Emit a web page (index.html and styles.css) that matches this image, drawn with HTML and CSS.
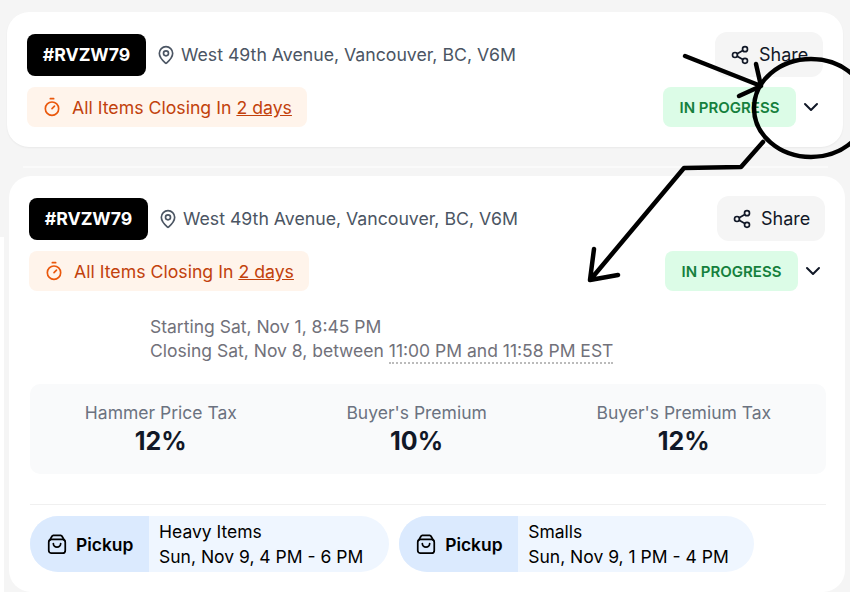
FILE: index.html
```html
<!DOCTYPE html>
<html lang="en">
<head>
    <meta charset="UTF-8">
    <meta name="viewport" content="width=device-width, initial-scale=1.0">
    <title>Auction Cards</title>
    <link rel="stylesheet" href="styles.css">
</head>
<body>
    <svg class="iconDefs" width="0" height="0">
        <symbol id="iconPin" viewBox="0 0 24 24">
            <path d="M20 10c0 4.993-5.539 10.193-7.399 11.799a1 1 0 0 1-1.202 0C9.539 20.193 4 14.993 4 10a8 8 0 0 1 16 0"/>
            <circle cx="12" cy="10" r="3"/>
        </symbol>
        <symbol id="iconTimer" viewBox="0 0 24 24">
            <path d="M10 2h4M12 14l3-3"/>
            <circle cx="12" cy="14" r="8"/>
        </symbol>
        <symbol id="iconShare" viewBox="0 0 24 24">
            <circle cx="18" cy="5" r="3"/>
            <circle cx="6" cy="12" r="3"/>
            <circle cx="18" cy="19" r="3"/>
            <path d="M8.59 13.51l6.83 3.98M15.41 6.51l-6.82 3.98"/>
        </symbol>
        <symbol id="iconChevron" viewBox="0 0 24 24">
            <path d="M6 9l6 6 6-6"/>
        </symbol>
        <symbol id="iconBag" viewBox="0 0 24 24">
            <rect x="3" y="7" width="18" height="15" rx="3"/>
            <path d="M4 8l2.500-4.500A2 2 0 0 1 8 2.500h8a2 2 0 0 1 1.500 1L20 8M8 11.500a4 4 0 0 0 8 0"/>
        </symbol>
    </svg>

    <div class="page">
        <!-- collapsed card -->
        <section class="card cardTop">
            <div class="row">
                <div class="rowLeft">
                    <span class="tag">#RVZW79</span>
                    <svg class="icon iconPin"><use href="#iconPin"/></svg>
                    <span class="address">West 49th Avenue, Vancouver, BC, V6M</span>
                </div>
                <button class="shareBtn" type="button">
                    <svg class="icon iconShare"><use href="#iconShare"/></svg>
                    Share
                </button>
            </div>
            <div class="row rowStatus">
                <div class="closing">
                    <svg class="icon iconTimer"><use href="#iconTimer"/></svg>
                    <span class="closingText">All Items Closing In <u>2 days</u></span>
                </div>
                <div class="rowRight">
                    <span class="status">IN PROGRESS</span>
                    <svg class="icon iconChevron"><use href="#iconChevron"/></svg>
                </div>
            </div>
        </section>

        <div class="seam"></div>

        <!-- expanded card -->
        <section class="card cardOpen">
            <div class="row">
                <div class="rowLeft">
                    <span class="tag">#RVZW79</span>
                    <svg class="icon iconPin"><use href="#iconPin"/></svg>
                    <span class="address">West 49th Avenue, Vancouver, BC, V6M</span>
                </div>
                <button class="shareBtn" type="button">
                    <svg class="icon iconShare"><use href="#iconShare"/></svg>
                    Share
                </button>
            </div>
            <div class="row rowStatus">
                <div class="closing">
                    <svg class="icon iconTimer"><use href="#iconTimer"/></svg>
                    <span class="closingText">All Items Closing In <u>2 days</u></span>
                </div>
                <div class="rowRight">
                    <span class="status">IN PROGRESS</span>
                    <svg class="icon iconChevron"><use href="#iconChevron"/></svg>
                </div>
            </div>

            <div class="dates">
                <p>Starting Sat, Nov 1, 8:45 PM</p>
                <p>Closing Sat, Nov 8, between <span class="dotted">11:00 PM and 11:58 PM EST</span></p>
            </div>

            <div class="fees">
                <div class="fee">
                    <span class="feeLabel">Hammer Price Tax</span>
                    <b class="feeValue">12%</b>
                </div>
                <div class="fee">
                    <span class="feeLabel">Buyer's Premium</span>
                    <b class="feeValue">10%</b>
                </div>
                <div class="fee">
                    <span class="feeLabel">Buyer's Premium Tax</span>
                    <b class="feeValue">12%</b>
                </div>
            </div>

            <div class="pickups">
                <div class="pickup">
                    <div class="pickupHead">
                        <svg class="icon iconBag"><use href="#iconBag"/></svg>
                        Pickup
                    </div>
                    <div class="pickupInfo">
                        <span>Heavy Items</span>
                        <span>Sun, Nov 9, 4 PM - 6 PM</span>
                    </div>
                </div>
                <div class="pickup">
                    <div class="pickupHead">
                        <svg class="icon iconBag"><use href="#iconBag"/></svg>
                        Pickup
                    </div>
                    <div class="pickupInfo">
                        <span>Smalls</span>
                        <span>Sun, Nov 9, 1 PM - 4 PM</span>
                    </div>
                </div>
            </div>
        </section>
    </div>

    <!-- hand drawn marks on top of the screenshot -->
    <svg class="marks" viewBox="0 0 850 598">
        <ellipse cx="811" cy="108" rx="57" ry="49"/>
        <path d="M685 56L761 86M756 64L761 86L739 96"/>
        <path d="M763 142L741 167L684 168L591 279M594 249L590 280L618 275"/>
    </svg>
</body>
</html>
```

FILE: styles.css
```css
* {
    box-sizing: border-box;
}
html, body {
    margin: 0;
    background: #fff;
}
body {
    position: relative;
    width: 850px;
    height: 598px;
    overflow: hidden;
    font-family: Inter, "Liberation Sans", sans-serif;
}
.iconDefs {
    position: absolute;
}
.page {
    height: 592px;
    padding-top: 12px;
    background: linear-gradient(#fff, #fff) no-repeat 0 237px / 4px 100%, #f5f5f5;
}
.card {
    width: 836px;
    padding: 20px;
    background: #fff;
    border-radius: 22px;
}
.cardTop {
    margin-left: 7px;
    box-shadow: 0 1px 2px rgba(0, 0, 0, 0.05);
}
.seam {
    height: 2px;
    margin: 19px 22px 8px 23px;
    background: #fafafa;
}
.cardOpen {
    height: 416px;
    margin-left: 9px;
}
.icon {
    fill: none;
    stroke: currentColor;
    stroke-width: 2;
    stroke-linecap: round;
    stroke-linejoin: round;
    flex: none;
}
.row {
    display: flex;
    justify-content: space-between;
    align-items: center;
    height: 45px;
}
.rowStatus {
    height: 40px;
    margin-top: 10px;
}
.rowLeft, .rowRight, .closing {
    display: flex;
    align-items: center;
}
.tag {
    display: flex;
    align-items: center;
    justify-content: center;
    width: 119px;
    height: 42px;
    background: #000;
    color: #fff;
    border-radius: 8px;
    font-size: 17.7px;
    font-weight: 700;
}
.iconPin {
    width: 20px;
    height: 20px;
    margin-left: 10px;
    color: #4b5563;
}
.address {
    margin-left: 5px;
    font-size: 17.7px;
    color: #4b5563;
}
.shareBtn {
    display: flex;
    align-items: center;
    gap: 9px;
    width: 108px;
    height: 45px;
    padding: 0 0 0 15px;
    border: none;
    background: #f5f5f5;
    border-radius: 12px;
    font: 18px Inter, "Liberation Sans", sans-serif;
    color: #111827;
}
.iconShare {
    width: 20px;
    height: 20px;
}
.closing {
    height: 40px;
    width: 280px;
    padding-left: 15px;
    gap: 10px;
    background: #fff4eb;
    border-radius: 8px;
    font-size: 17.7px;
    color: #c2410c;
}
.closingText {
    padding-top: 1px;
}
.iconTimer {
    width: 20px;
    height: 20px;
    color: #ea580c;
}
.status {
    display: flex;
    align-items: center;
    justify-content: center;
    width: 133px;
    height: 40px;
    background: #dcfce7;
    color: #15803d;
    border-radius: 8px;
    font-size: 15px;
    font-weight: 600;
}
.iconChevron {
    width: 24px;
    height: 24px;
    margin-left: 3px;
    color: #111827;
}
.dates {
    margin: 24px 0 0 121px;
    font-size: 17.5px;
    line-height: 24px;
    color: #71717a;
}
.dates p {
    margin: 0;
}
.dotted {
    padding-bottom: 1px;
    border-bottom: 2px dotted #bbb;
}
.fees {
    display: flex;
    justify-content: space-around;
    align-items: center;
    width: 796px;
    height: 90px;
    margin: 21px 0 0 1px;
    background: #f9fafb;
    border-radius: 10px;
}
.fee {
    display: flex;
    flex-direction: column;
    align-items: center;
    gap: 3px;
}
.feeLabel {
    font-size: 17.5px;
    color: #6b7280;
}
.feeValue {
    font-size: 25px;
    font-weight: 700;
    color: #111827;
}
.pickups {
    display: flex;
    gap: 10.5px;
    width: 796px;
    margin: 30px 0 0 1px;
    padding-top: 11px;
    border-top: 1px solid #f0f0f0;
}
.pickup {
    display: flex;
    height: 56px;
    background: #eff6ff;
    border-radius: 28px;
    overflow: hidden;
    color: #000;
}
.pickupHead {
    display: flex;
    align-items: center;
    gap: 8px;
    width: 119px;
    padding-left: 16px;
    background: #dbeafe;
    font-size: 17.4px;
    font-weight: 600;
}
.iconBag {
    width: 22px;
    height: 22px;
    stroke-width: 1.9;
}
.pickupInfo {
    display: flex;
    flex-direction: column;
    justify-content: center;
    padding: 0 25.5px 0 10px;
    font-size: 17.5px;
    line-height: 25px;
}
.marks {
    position: absolute;
    top: 0;
    left: 0;
    width: 850px;
    height: 598px;
    fill: none;
    stroke: #000;
    stroke-width: 4.5;
    stroke-linecap: round;
    stroke-linejoin: round;
}
```
